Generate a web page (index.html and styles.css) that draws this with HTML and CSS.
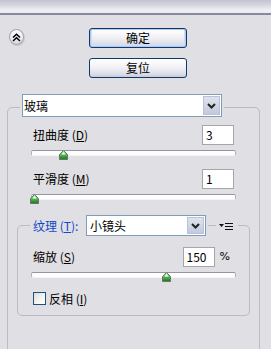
FILE: index.html
```html
<!DOCTYPE html>
<html lang="zh-CN">
<head>
<meta charset="utf-8">
<title>玻璃</title>
<link rel="stylesheet" href="styles.css">
</head>
<body>
<div class="titlebar"></div>
<div class="top">
  <button class="collapse" type="button" aria-label="收起">
    <svg width="9" height="9" viewBox="0 0 9 9"><path d="M1 4.5 L4.5 1.2 L8 4.5 M1 8 L4.5 4.7 L8 8" fill="none" stroke="#000" stroke-width="1.5"/></svg>
  </button>
  <div class="btns">
    <button class="btn default" type="button">确定</button>
    <button class="btn" type="button">复位</button>
  </div>
</div>

<div class="group outer">
  <div class="head outer-head">
    <div class="select wide">
      <span class="sel-text">玻璃</span>
      <span class="arrow"><svg width="9" height="6" viewBox="0 0 9 6"><path d="M1 1 L4.5 4.5 L8 1" fill="none" stroke="#222" stroke-width="2"/></svg></span>
    </div>
  </div>

  <div class="row">
    <span class="lbl">扭曲度 (<u>D</u>)</span>
    <span class="input">3</span>
  </div>
  <div class="slider"><span class="thumb" style="left:28px"></span></div>

  <div class="row row2">
    <span class="lbl">平滑度 (<u>M</u>)</span>
    <span class="input">1</span>
  </div>
  <div class="slider"><span class="thumb" style="left:-1px"></span></div>

  <div class="group inner">
    <div class="head inner-head">
      <span class="lbl blue head-lbl">纹理 (<u>T</u>):</span>
      <span class="sel-wrap">
        <span class="select narrow">
          <span class="sel-text">小镜头</span>
          <span class="arrow"><svg width="9" height="6" viewBox="0 0 9 6"><path d="M1 1 L4.5 4.5 L8 1" fill="none" stroke="#222" stroke-width="2"/></svg></span>
        </span>
      </span>
      <span class="menu"><svg width="16" height="8" viewBox="0 0 16 8"><path d="M1 2 H6 L3.5 5 Z" fill="#111"/><path d="M7 1.5 H15 M7 4.5 H15 M7 7.5 H15" stroke="#111" stroke-width="1"/></svg></span>
    </div>

    <div class="row irow">
      <span class="lbl">缩放 (<u>S</u>)</span>
      <span class="input">150</span>
      <span class="pct">%</span>
    </div>
    <div class="slider islider"><span class="thumb" style="left:131px"></span></div>

    <label class="check"><span class="box"></span><span>反相 (<u>I</u>)</span></label>
  </div>
</div>
</body>
</html>
```

FILE: styles.css
```css
* { box-sizing: border-box; }

body {
  margin: 0;
  width: 271px;
  height: 349px;
  overflow: hidden;
  background: #e0dfe3;
  font-family: "Noto Sans CJK SC", "DejaVu Sans", sans-serif;
  font-size: 12px;
  line-height: 14px;
  color: #000;
}

.titlebar {
  height: 15px;
  background: linear-gradient(#c2c3d1, #d9d9e3 45%, #f0f0f4 80%, #e9e9ef);
  border-bottom: 2px solid #8a88a3;
}

.top {
  display: flex;
  align-items: flex-start;
  padding: 13px 0 0 9px;
}

.collapse {
  width: 15px;
  height: 16px;
  margin-top: 1px;
  padding: 0;
  border: 1px solid #a4a4b0;
  border-radius: 50%;
  background: linear-gradient(#ffffff, #ebebf0 60%, #d6d6de);
  box-shadow: 1px 1px 0 #c9c8cf;
  display: flex;
  align-items: center;
  justify-content: center;
}

.btns {
  margin-left: 65px;
  display: flex;
  flex-direction: column;
  gap: 10px;
}

.btn {
  width: 98px;
  height: 20px;
  padding: 0;
  border: 1px solid #0d3a6c;
  border-radius: 3px;
  background: linear-gradient(#ffffff, #f2f2f6 45%, #dcdce7 85%, #c9c9d8);
  font-family: inherit;
  font-size: 12px;
  line-height: 14px;
  color: #000;
}

.btn.default {
  box-shadow: inset 0 0 0 1px #b4c6ec, inset 0 -1px 0 2px #d2dcf2;
}

.group {
  border: 1px solid #bdbac4;
  border-radius: 5px;
}

.outer {
  margin: 29px 11px 0 7px;
  padding-bottom: 80px;
}

.head {
  display: flex;
  align-items: center;
  width: max-content;
}

.outer-head {
  margin: -14px 0 0 12px;
  padding: 0 2px;
  background: #e0dfe3;
}

.select {
  display: flex;
  align-items: center;
  justify-content: space-between;
  background: #fff;
  border: 1px solid #7f9db9;
}

.select.wide {
  width: 200px;
  height: 23px;
  padding-left: 1px;
}

.select.narrow {
  width: 120px;
  height: 21px;
  padding-left: 3px;
}

.arrow {
  align-self: stretch;
  width: 17px;
  margin: 1px;
  border: 1px solid #b9c2d8;
  background: linear-gradient(#dfe3ef, #c3c9dc);
  display: flex;
  align-items: center;
  justify-content: center;
}

.row {
  display: flex;
  align-items: center;
  justify-content: space-between;
  margin: 8px 25px 0 25px;
}

.row2 {
  margin-top: 9px;
}

.input {
  width: 32px;
  height: 20px;
  border: 1px solid #a6a5ab;
  background: #fff;
  padding-left: 3px;
  line-height: 18px;
}

.slider {
  position: relative;
  height: 10px;
  margin: 3px 23px 0;
}

.slider::before {
  content: "";
  display: block;
  height: 4px;
  margin-top: 5px;
  border: 1px solid #b3b2ba;
  border-top-color: #96959e;
  border-bottom-color: #f4f4f6;
  border-radius: 2px;
  background: #fdfdfd;
}

.thumb {
  position: absolute;
  top: 0;
  width: 9px;
  height: 10px;
  background: url("data:image/svg+xml,%3Csvg xmlns='http://www.w3.org/2000/svg' width='9' height='10' viewBox='0 0 9 10'%3E%3Cdefs%3E%3ClinearGradient id='g' x1='0' y1='0' x2='0' y2='1'%3E%3Cstop offset='0' stop-color='%23b8f0b0'/%3E%3Cstop offset='0.5' stop-color='%234cb84c'/%3E%3Cstop offset='1' stop-color='%23187818'/%3E%3C/linearGradient%3E%3C/defs%3E%3Cpath d='M4.5 0.5 L8.5 4.5 L8.5 9.5 L0.5 9.5 L0.5 4.5 Z' fill='url(%23g)' stroke='%23707070'/%3E%3Cpath d='M4.5 2 L6.5 4.5 L2.5 4.5 Z' fill='%23ffffff'/%3E%3C/svg%3E") no-repeat;
}

.inner {
  margin: 21px 9px 0 9px;
  padding-bottom: 10px;
}

.inner-head {
  margin: -11px 0 0 12px;
}

.head-lbl {
  width: 56px;
  height: 21px;
  padding-left: 3px;
  display: flex;
  align-items: center;
  background: #e0dfe3;
  white-space: nowrap;
}

.blue {
  color: #1048c8;
}

.sel-wrap {
  padding-right: 2px;
  background: #e0dfe3;
  display: flex;
}

.menu {
  margin-left: 8px;
  padding: 0 4px 0 2px;
  background: #e0dfe3;
  display: flex;
  align-items: center;
  height: 10px;
}

.irow {
  margin: 11px 19px 0 15px;
  justify-content: flex-start;
}

.irow .lbl {
  flex: 1;
}

.pct {
  margin-left: 5px;
  font-family: "DejaVu Sans", sans-serif;
  font-size: 11px;
}

.islider {
  margin: 3px 13px 0;
}

.check {
  display: flex;
  align-items: center;
  gap: 3px;
  margin: 10px 0 0 15px;
  height: 13px;
}

.box {
  width: 13px;
  height: 13px;
  border: 1px solid #1c5180;
  background: linear-gradient(135deg, #dcdcd6, #f6f6f4 60%, #ffffff);
}
```
